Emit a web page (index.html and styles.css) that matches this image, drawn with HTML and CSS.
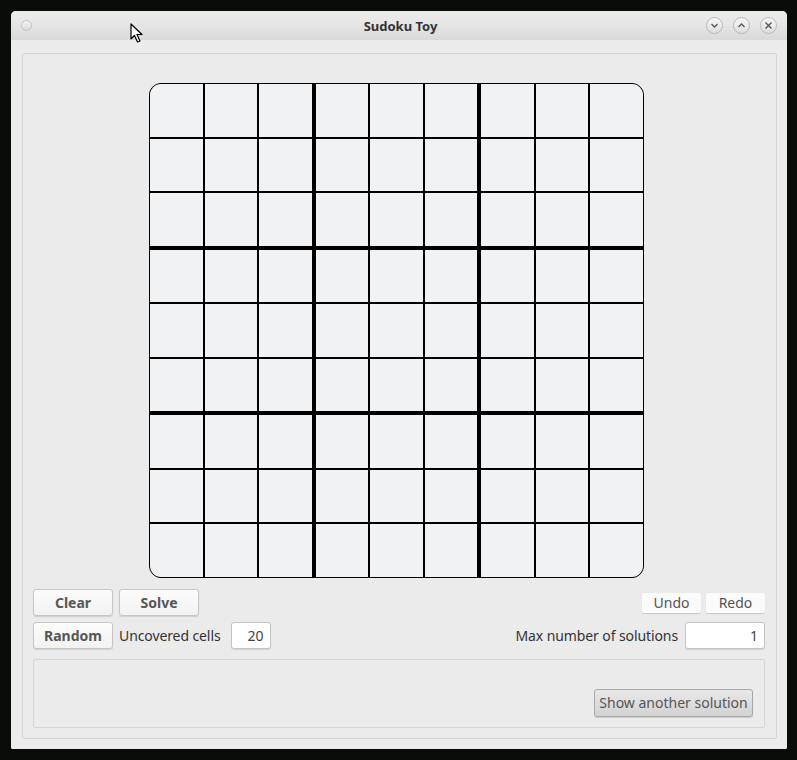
FILE: index.html
```html
<!DOCTYPE html>
<html>
<head>
<meta charset="utf-8">
<link rel="stylesheet" href="styles.css">
</head>
<body>
<div class="window">
  <div class="titlebar">
    <div class="tb-left"><span class="dot"></span></div>
    <div class="title">Sudoku Toy</div>
    <div class="tb-right">
      <span class="wbtn"><svg width="9" height="9" viewBox="0 0 9 9"><path d="M1.5 3 L4.5 6 L7.5 3" fill="none" stroke="#555" stroke-width="1.3"/></svg></span>
      <span class="wbtn"><svg width="9" height="9" viewBox="0 0 9 9"><path d="M1.5 6 L4.5 3 L7.5 6" fill="none" stroke="#555" stroke-width="1.3"/></svg></span>
      <span class="wbtn"><svg width="9" height="9" viewBox="0 0 9 9"><path d="M1.5 1.5 L7.5 7.5 M7.5 1.5 L1.5 7.5" fill="none" stroke="#555" stroke-width="1.4"/></svg></span>
    </div>
  </div>
  <div class="frame">
    <div class="panel">
      <div class="board">
        <div class="box"><div class="cell"></div><div class="cell"></div><div class="cell"></div><div class="cell"></div><div class="cell"></div><div class="cell"></div><div class="cell"></div><div class="cell"></div><div class="cell"></div></div>
        <div class="box"><div class="cell"></div><div class="cell"></div><div class="cell"></div><div class="cell"></div><div class="cell"></div><div class="cell"></div><div class="cell"></div><div class="cell"></div><div class="cell"></div></div>
        <div class="box"><div class="cell"></div><div class="cell"></div><div class="cell"></div><div class="cell"></div><div class="cell"></div><div class="cell"></div><div class="cell"></div><div class="cell"></div><div class="cell"></div></div>
        <div class="box"><div class="cell"></div><div class="cell"></div><div class="cell"></div><div class="cell"></div><div class="cell"></div><div class="cell"></div><div class="cell"></div><div class="cell"></div><div class="cell"></div></div>
        <div class="box"><div class="cell"></div><div class="cell"></div><div class="cell"></div><div class="cell"></div><div class="cell"></div><div class="cell"></div><div class="cell"></div><div class="cell"></div><div class="cell"></div></div>
        <div class="box"><div class="cell"></div><div class="cell"></div><div class="cell"></div><div class="cell"></div><div class="cell"></div><div class="cell"></div><div class="cell"></div><div class="cell"></div><div class="cell"></div></div>
        <div class="box"><div class="cell"></div><div class="cell"></div><div class="cell"></div><div class="cell"></div><div class="cell"></div><div class="cell"></div><div class="cell"></div><div class="cell"></div><div class="cell"></div></div>
        <div class="box"><div class="cell"></div><div class="cell"></div><div class="cell"></div><div class="cell"></div><div class="cell"></div><div class="cell"></div><div class="cell"></div><div class="cell"></div><div class="cell"></div></div>
        <div class="box"><div class="cell"></div><div class="cell"></div><div class="cell"></div><div class="cell"></div><div class="cell"></div><div class="cell"></div><div class="cell"></div><div class="cell"></div><div class="cell"></div></div>
      </div>
      <div class="row row1">
        <div class="group">
          <button class="btn">Clear</button>
          <button class="btn">Solve</button>
        </div>
        <div class="group tight">
          <button class="flat">Undo</button>
          <button class="flat">Redo</button>
        </div>
      </div>
      <div class="row row2">
        <div class="group">
          <button class="btn">Random</button>
          <span class="label">Uncovered cells</span>
          <span class="spin spin-small">20</span>
        </div>
        <div class="group">
          <span class="label">Max number of solutions</span>
          <span class="spin spin-wide">1</span>
        </div>
      </div>
      <div class="groupbox">
        <button class="btn-gray">Show another solution</button>
      </div>
    </div>
  </div>
  <svg class="cursor" width="14" height="21" viewBox="0 0 14 21"><path d="M1 1 L1 16 L4.5 12.5 L7.5 19 L10 18 L7 11.5 L12 11.5 Z" fill="#fff" stroke="#000" stroke-width="1.2" stroke-linejoin="round"/></svg>
</div>
</body>
</html>
```

FILE: styles.css
```css
html, body {
  margin: 0;
  padding: 0;
}
body {
  width: 797px;
  height: 760px;
  background: #0a0d07;
  font-family: "Noto Sans", "Open Sans", sans-serif;
  font-size: 14px;
  color: #333;
  overflow: hidden;
}
.window {
  position: relative;
  margin: 11px 0 0 11px;
  width: 776px;
  height: 738px;
  border-radius: 5px 5px 2px 2px;
  background: #ebebeb;
  display: flex;
  flex-direction: column;
  overflow: hidden;
}
.titlebar {
  height: 29px;
  flex: none;
  display: grid;
  grid-template-columns: 1fr auto 1fr;
  align-items: center;
  padding: 0 10px;
  background: linear-gradient(#ececec 0%, #e6e6e6 45%, #d9d9d9 100%);
}
.tb-left {
  display: flex;
  align-items: center;
}
.dot {
  width: 9px;
  height: 9px;
  border-radius: 50%;
  border: 1px solid #c4c4c4;
  background: linear-gradient(#f3f3f3, #dcdcdc);
}
.title {
  font-weight: bold;
  font-size: 13px;
  color: #333;
  padding-left: 3px;
}
.tb-right {
  display: flex;
  justify-content: flex-end;
  gap: 10px;
}
.wbtn {
  width: 15px;
  height: 15px;
  border-radius: 50%;
  border: 1px solid #b9b9b9;
  background: linear-gradient(#f7f7f7, #dedede);
  display: flex;
  align-items: center;
  justify-content: center;
}
.frame {
  flex: 1;
  padding: 13px 10px 10px 11px;
  display: flex;
  background: #ececec;
}
.panel {
  flex: 1;
  border: 1px solid #d6d6d6;
  border-radius: 2px;
  background: #ebebeb;
  padding: 0 11px 10px 10px;
  display: flex;
  flex-direction: column;
}
.board {
  margin: 29px 0 11px 116px;
  width: 493px;
  height: 493px;
  border: 1px solid #000;
  border-radius: 12px;
  overflow: hidden;
  background: #000;
  display: grid;
  grid-template-columns: repeat(3, 1fr);
  grid-template-rows: repeat(3, 1fr);
  gap: 4px;
}
.box {
  display: grid;
  grid-template-columns: repeat(3, 1fr);
  grid-template-rows: repeat(3, 1fr);
  gap: 2px;
}
.cell {
  background: #f1f2f4;
}
.row {
  display: flex;
  justify-content: space-between;
  align-items: center;
}
.row1 {
  height: 27px;
}
.row2 {
  margin-top: 6px;
  height: 27px;
}
.group {
  display: flex;
  align-items: center;
  gap: 6px;
}
.group.tight {
  gap: 5px;
}
.btn {
  width: 80px;
  height: 27px;
  border: 1px solid #c6c6c6;
  border-radius: 3px;
  background: linear-gradient(#fcfcfc, #f2f2f2);
  box-shadow: 0 1px 1px rgba(0,0,0,0.12);
  font-family: inherit;
  font-size: 14px;
  font-weight: bold;
  color: #575757;
  padding: 0;
}
.flat {
  width: 59px;
  height: 20px;
  border: none;
  border-radius: 2px;
  background: #fbfbfb;
  box-shadow: 0 1px 1px rgba(0,0,0,0.15);
  font-family: inherit;
  font-size: 14px;
  color: #555;
  padding: 0;
}
.label {
  color: #333;
  white-space: nowrap;
  font-size: 14px;
  letter-spacing: -0.1px;
}
.spin {
  border: 1px solid #c4c4c4;
  border-radius: 3px;
  background: #fff;
  box-shadow: 0 1px 1px rgba(0,0,0,0.1);
  display: flex;
  align-items: center;
  justify-content: flex-end;
  padding-right: 6px;
  color: #444;
  box-sizing: border-box;
  height: 27px;
}
.spin-small {
  width: 40px;
  margin-left: 4px;
}
.spin-wide {
  width: 80px;
  margin-left: 1px;
}
.groupbox {
  margin-top: 10px;
  flex: 1;
  border: 1px solid #d6d6d6;
  border-radius: 2px;
  background: #ececec;
  display: flex;
  justify-content: flex-end;
  align-items: flex-end;
  padding: 0 11px 10px 0;
}
.btn-gray {
  width: 159px;
  height: 28px;
  border: 1px solid #a9a9a9;
  border-radius: 3px;
  background: linear-gradient(#e9e9e9, #d2d2d2);
  box-shadow: 0 1px 1px rgba(0,0,0,0.15);
  font-family: inherit;
  font-size: 14px;
  color: #555;
  padding: 0 0 2px 0;
}
.cursor {
  position: absolute;
  left: 119px;
  top: 12px;
}
```
